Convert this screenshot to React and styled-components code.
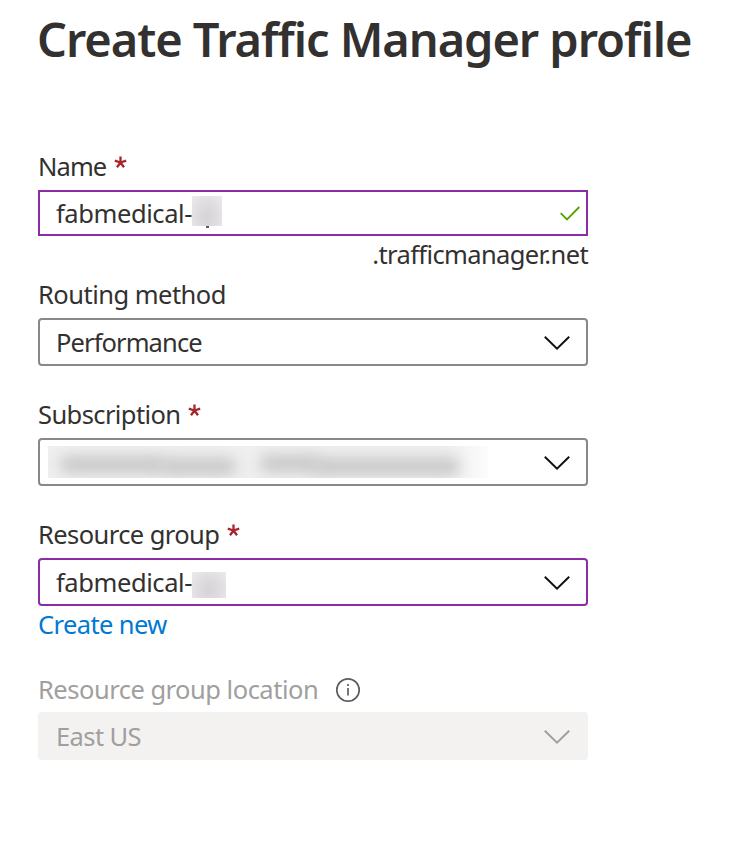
import React from "react";
import styled, { createGlobalStyle } from "styled-components";

const GlobalStyle = createGlobalStyle`
  * { box-sizing: border-box; }
  body {
    margin: 0;
    background: #ffffff;
    color: #323130;
    font-family: "Noto Sans", "Open Sans", sans-serif;
    font-size: 25.5px;
  }
`;

const Page = styled.main`
  display: flex;
  flex-direction: column;
  width: 734px;
  height: 860px;
  padding-left: 38px;
  overflow: hidden;
`;

const Title = styled.h1`
  margin: 0 0 0 -1px;
  height: 142px;
  padding-top: 7px;
  font-size: 47px;
  font-weight: 600;
  line-height: 64px;
  letter-spacing: -1.06px;
  white-space: nowrap;
`;

const Form = styled.form`
  display: flex;
  flex-direction: column;
  width: 550px;
`;

const Field = styled.div`
  display: flex;
  flex-direction: column;
  padding-top: ${(p) => p.$gap || 0}px;
`;

const Label = styled.label`
  display: flex;
  align-items: center;
  height: ${(p) => p.$height || 48}px;
  color: ${(p) => (p.$disabled ? "#a19f9d" : "#323130")};
  white-space: nowrap;
`;

const Spaced = styled.span`
  letter-spacing: ${(p) => p.$spacing || 0}px;
  white-space: nowrap;
`;

const Control = styled.div`
  display: flex;
  align-items: center;
  height: ${(p) => p.$height || 48}px;
  padding: 0 16px;
  border: 2px solid ${(p) => p.$border || "#8a8886"};
  border-radius: ${(p) => (p.$square ? 0 : 4)}px;
  background: ${(p) => (p.$disabled ? "#f3f2f1" : "#ffffff")};
  color: ${(p) => (p.$disabled ? "#a19f9d" : "#323130")};

  > svg { margin-left: auto; flex: none; }
`;

const Suffix = styled.div`
  height: 34px;
  padding-top: 2px;
  line-height: 32px;
  text-align: right;
`;

const CreateLink = styled.a`
  height: 36px;
  line-height: 36px;
  color: #0078d4;
`;

const RequiredIcon = styled.svg`
  margin: -8px 0 0 8px;
`;

const InfoIcon = styled.svg`
  margin: 1px 0 0 17px;
`;

const Mask = styled.span`
  position: relative;
  flex: none;
  width: ${(p) => p.$width}px;
  height: ${(p) => p.$height}px;
  margin-top: ${(p) => p.$shift || 0}px;
  background: radial-gradient(ellipse at 50% 68%, #d5d3d5 0%, #dedcdf 45%, #eeeaf0 100%);
`;

const Descender = styled.i`
  position: absolute;
  left: 14px;
  top: 30px;
  width: 3px;
  height: 2px;
  background: #5b5a59;
`;

const RedactedLine = styled.span`
  position: relative;
  flex: none;
  width: 440px;
  height: 32px;
  margin-left: -8px;
  overflow: hidden;
  background: linear-gradient(90deg, #efefef 0, #efefef 400px, #fcfcfc 440px);
`;

const Smudge = styled.i`
  position: absolute;
  left: ${(p) => p.$left}px;
  top: ${(p) => p.$top || 10}px;
  width: ${(p) => p.$width}px;
  height: 17px;
  border-radius: 8px;
  background: #c8c8c8;
  filter: blur(7px);
`;

const Required = () => (
  <RequiredIcon width="13" height="13" viewBox="0 0 13 13" fill="none" stroke="#a4262c" strokeWidth="2.3">
    <path d="M6.5 6.5V.5M6.5 6.5L.8 4.6M6.5 6.5L12.2 4.6M6.5 6.5L3 11.3M6.5 6.5L10 11.3" />
  </RequiredIcon>
);

const ChevronIcon = styled.svg`
  margin-top: 2px;
`;

const Chevron = ({ color = "#111111" }) => (
  <ChevronIcon width="26" height="14" viewBox="0 0 26 14" fill="none" stroke={color} strokeWidth="2">
    <path d="M.8.8L13 12.6L25.2.8" />
  </ChevronIcon>
);

const CheckSlot = styled.span`
  display: flex;
  margin: 1px -10px 0 auto;
`;

export default function App() {
  return (
    <>
      <GlobalStyle />
      <Page>
        <Title>Create Traffic Manager profile</Title>
        <Form>
          <Field>
            <Label><Spaced $spacing={-0.9}>Name</Spaced><Required /></Label>
            <Control $height={46} $border="#8a2da5" $square>
              <Spaced $spacing={-0.42}>fabmedical-</Spaced>
              <Mask $width={30} $height={30} $shift={-4}><Descender /></Mask>
              <CheckSlot>
                <svg width="20" height="15" viewBox="0 0 20 15" fill="none" stroke="#57a300" strokeWidth="1.8">
                  <path d="M.7 7.2L7 13.5L19.3 1" />
                </svg>
              </CheckSlot>
            </Control>
            <Suffix><Spaced $spacing={-0.63}>.trafficmanager.net</Spaced></Suffix>
          </Field>
          <Field>
            <Label><Spaced $spacing={-0.52}>Routing method</Spaced></Label>
            <Control><Spaced $spacing={-0.9}>Performance</Spaced><Chevron /></Control>
          </Field>
          <Field $gap={24}>
            <Label><Spaced $spacing={-0.6}>Subscription</Spaced><Required /></Label>
            <Control>
              <RedactedLine>
                <Smudge $left={12} $width={106} />
                <Smudge $left={112} $width={76} $top={12} />
                <Smudge $left={212} $width={60} $top={9} />
                <Smudge $left={264} $width={148} $top={12} />
              </RedactedLine>
              <Chevron />
            </Control>
          </Field>
          <Field $gap={24}>
            <Label><Spaced $spacing={-0.58}>Resource group</Spaced><Required /></Label>
            <Control $border="#8a2da5">
              <Spaced $spacing={-0.42}>fabmedical-</Spaced>
              <Mask $width={34} $height={26} $shift={6} />
              <Chevron />
            </Control>
            <CreateLink><Spaced $spacing={-0.6}>Create new</Spaced></CreateLink>
          </Field>
          <Field $gap={24}>
            <Label $height={46} $disabled>
              <Spaced $spacing={-0.5}>Resource group location</Spaced>
              <InfoIcon width="26" height="26" viewBox="0 0 26 26" fill="none" stroke="#605e5c" strokeWidth="1.7">
                <circle cx="13" cy="13" r="11.2" />
                <path d="M13 11V18.5M13 7V9" />
              </InfoIcon>
            </Label>
            <Control $disabled $border="#f3f2f1"><Spaced $spacing={-0.6}>East US</Spaced><Chevron color="#a19f9d" /></Control>
          </Field>
        </Form>
      </Page>
    </>
  );
}
